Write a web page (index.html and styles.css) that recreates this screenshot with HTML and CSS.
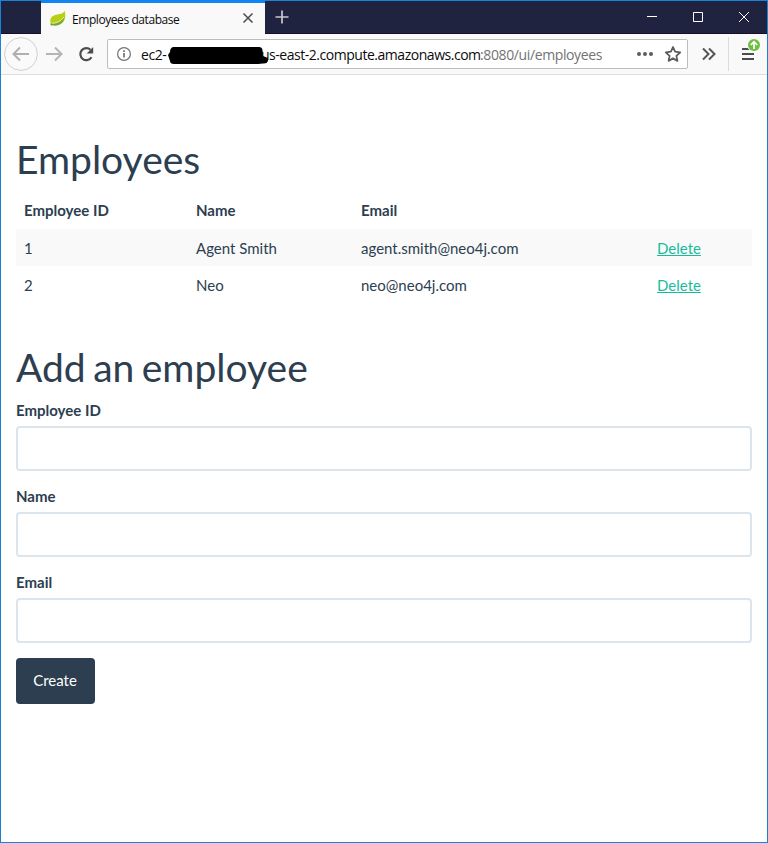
FILE: index.html
```html
<!DOCTYPE html>
<html lang="en">
<head>
<meta charset="utf-8">
<title>Employees database</title>
<link rel="stylesheet" href="styles.css">
</head>
<body>
<div class="window">
  <header class="titlebar">
    <div class="tab">
      <svg class="leaf" width="18" height="18" viewBox="0 0 18 18"><path d="M15.7 1C17 6 16.4 11 12.500 13.500C8.800 15.800 5 15 3 14.500C.5 12.500.5 8 4 6C8 3.600 13 5 15.700 1Z" fill="#b9cf17"/><path d="M1.200 13.600C8 14.200 12 12 15.500 7.300C14.700 12.800 9.500 17.200 3 15.300Z" fill="#75a83b"/><path d="M2.500 13.300C8 13.200 12 11 14.800 7" fill="none" stroke="#e6efa0"/><circle cx="2.500" cy="14.400" r="1" fill="#65963a"/></svg>
      <span class="tab-title">Employees database</span>
      <svg class="tab-close" width="12" height="12" viewBox="0 0 12 12"><path d="M1.500 1.500l9 9m0-9l-9 9" stroke="#4a4a4f" stroke-width="1.500"/></svg>
    </div>
    <svg class="new-tab" width="16" height="16" viewBox="0 0 16 16"><path d="M8 1.500v13M1.500 8h13" stroke="#c9c9d1" stroke-width="1.700"/></svg>
    <div class="window-buttons">
      <svg width="46" height="32" viewBox="0 0 46 32"><path d="M18 15.500h10" stroke="#fff"/></svg>
      <svg width="46" height="32" viewBox="0 0 46 32"><path d="M18.500 11.500h9v9h-9z" fill="none" stroke="#fff"/></svg>
      <svg width="46" height="32" viewBox="0 0 46 32"><path d="M18 11l10 10m0-10l-10 10" stroke="#fff"/></svg>
    </div>
  </header>
  <nav class="toolbar">
    <svg class="back" width="34" height="34" viewBox="0 0 34 34"><circle cx="17" cy="17" r="16.400" fill="#fafafa" stroke="#cfcfd1"/><path d="M25 17H10M16 10.500L9.500 17l6.500 6.500" fill="none" stroke="#b0b0b3" stroke-width="2"/></svg>
    <svg class="forward" width="18" height="18" viewBox="0 0 18 18"><path d="M1 9h15M10 2.500L16.500 9L10 15.500" fill="none" stroke="#b5b5b8" stroke-width="2"/></svg>
    <svg class="reload" width="18" height="18" viewBox="0 0 18 18"><path d="M14.500 12.200A6 6 0 1 1 13.500 4.800" fill="none" stroke="#4c4c4f" stroke-width="2.200"/><path d="M16.200 2v6.500H9.700Z" fill="#4c4c4f"/></svg>
    <div class="address">
      <svg class="info" width="16" height="16" viewBox="0 0 16 16"><circle cx="8" cy="8" r="6.400" fill="none" stroke="#737376" stroke-width="1.200"/><path d="M8 7v4.500M8 4.200v1.700" stroke="#737376" stroke-width="1.700"/></svg>
      <span class="url-start">ec2-</span><span class="url-host">us-east-2.compute.amazonaws.com</span><span class="url-path">:8080/ui/employees</span>
      <svg class="redaction" width="102" height="20" viewBox="0 0 102 20"><path d="M5 1H91Q94 1 94.500 4L95 10L100 12V15Q99 18 95 17.500L90 18H6Q2 18 2 15L0 9L2 6Q2 2 5 1Z"/></svg>
      <svg class="dots" width="18" height="6" viewBox="0 0 18 6"><g fill="#5c5c5f"><circle cx="3" cy="3" r="2"/><circle cx="9" cy="3" r="2"/><circle cx="15" cy="3" r="2"/></g></svg>
      <svg class="star" width="18" height="18" viewBox="0 0 18 18"><path d="M9 2l2.100 4.700 5.100.6-3.800 3.500 1 5.100L9 13.400l-4.400 2.500 1-5.100-3.800-3.500 5.100-.6Z" fill="none" stroke="#5c5c5f" stroke-width="1.800" stroke-linejoin="round"/></svg>
    </div>
    <svg class="overflow" width="16" height="16" viewBox="0 0 16 16"><path d="M2 2.500L7.500 8L2 13.500M8 2.500L13.500 8L8 13.500" fill="none" stroke="#555558" stroke-width="2"/></svg>
    <div class="menu">
      <svg width="26" height="28" viewBox="0 0 26 28"><path d="M4 12h12M4 17h12M4 22h12" stroke="#4c4c4f" stroke-width="2"/><circle cx="16" cy="8" r="6.800" fill="#f9f9fa"/><circle cx="16" cy="8" r="6" fill="#70bf40"/><path d="M16 12V5M12.800 8L16 4.800L19.200 8" fill="none" stroke="#fff" stroke-width="1.700"/></svg>
    </div>
  </nav>
  <main>
    <h1>Employees</h1>
    <table>
      <thead><tr><th class="id">Employee ID</th><th class="name">Name</th><th class="email">Email</th><th></th></tr></thead>
      <tbody>
        <tr><td>1</td><td>Agent Smith</td><td>agent.smith@neo4j.com</td><td><a href="#">Delete</a></td></tr>
        <tr><td>2</td><td>Neo</td><td>neo@neo4j.com</td><td><a href="#">Delete</a></td></tr>
      </tbody>
    </table>
    <h1>Add an employee</h1>
    <form>
      <div class="field"><label for="id">Employee ID</label><input id="id" type="text"></div>
      <div class="field"><label for="name">Name</label><input id="name" type="text"></div>
      <div class="field"><label for="email">Email</label><input id="email" type="text"></div>
      <button type="button">Create</button>
    </form>
  </main>
</div>
</body>
</html>
```
FILE: styles.css
```css
* { box-sizing: border-box; }
body { margin: 0; background: #fff; color: #2c3e50; font: 15px/1.42857 Lato, sans-serif; }
svg { display: block; flex: none; }
.window { height: 843px; border: 1px solid #1883d7; overflow: hidden; }
.titlebar { height: 33px; display: flex; background: #20233f; border-bottom: 1px solid #160f2a; }
.tab { width: 224px; height: 33px; margin-left: 40px; padding: 2px 10px 0 8px; display: flex; align-items: center; background: #f9f9fa; border-top: 2px solid #0a84ff; color: #0c0c0d; font: 12px/16px "Open Sans", sans-serif; }
.leaf { margin: -2px 5px 0 0; }
.tab-title { white-space: nowrap; letter-spacing: -0.43px; }
.tab-close { margin: -3px 1px 0 auto; }
.new-tab { margin: 8px 0 0 9px; }
.window-buttons { display: flex; margin-left: auto; }
.toolbar { height: 41px; padding-left: 3px; display: flex; align-items: center; background: #f9f9fa; border-bottom: 1px solid #dededf; }
.forward { margin-left: 7px; }
.reload { margin-left: 14px; }
.address { position: relative; width: 581px; height: 30px; margin-left: 12px; padding-left: 8px; display: flex; align-items: center; background: #fff; border: 1px solid #bdbdbf; border-radius: 2px; color: #0c0c0d; font: 14px/20px "Open Sans", sans-serif; letter-spacing: -0.47px; white-space: nowrap; }
.address span { padding-top: 2px; }
.url-start { width: 120px; margin-left: 9px; }
.url-host { width: 219px; }
.url-path { width: 123px; color: #737373; letter-spacing: -0.38px; }
.redaction { position: absolute; left: 60px; top: 6px; }
.dots { margin-left: 33px; }
.star { margin-left: 10px; }
.overflow { margin-left: 13px; }
.menu { height: 34px; margin-left: 11px; padding: 0 0 0 9px; border-left: 1px solid #dbdbdc; }
main { padding: 63px 15px 0; }
h1 { margin: 0 0 11px; font-size: 39px; line-height: 43px; font-weight: 400; word-spacing: -2.5px; }
table { width: 100%; margin-bottom: 43px; table-layout: fixed; border-collapse: collapse; }
th, td { height: 37px; padding: 0 8px; text-align: left; }
td { padding-top: 2px; }
.id { width: 172px; }
.name { width: 165px; }
.email { width: 296px; }
tbody tr:nth-child(odd) { background: #f9f9f9; }
a { color: #18bc9c; text-decoration: underline; }
.field { margin-bottom: 15px; }
label { display: block; margin-bottom: 5px; line-height: 21px; font-weight: 700; }
input { display: block; width: 100%; height: 45px; padding: 10px 15px; border: 2px solid #dce4ec; border-radius: 4px; background: #fff; font: inherit; }
button { display: block; width: 79px; height: 46px; padding: 0 1px 0 0; border: 0; border-radius: 4px; background: #2c3e50; color: #fff; font: inherit; }
```
